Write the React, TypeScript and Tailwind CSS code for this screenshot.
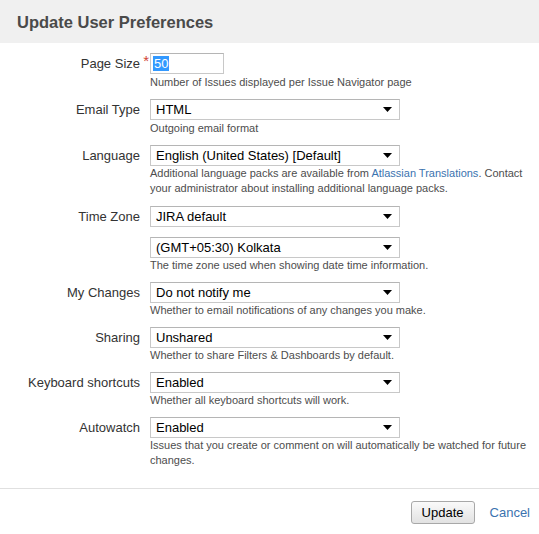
function Select({ value }: { value: string }) {
  return (
    <div className="flex h-[21px] w-[250px] items-center justify-between border border-[#c8c8c8] border-t-[#b5b5b5] bg-white pl-[5px] pr-[7px] text-[13px] text-black">
      <span>{value}</span>
      <svg width="9" height="5" viewBox="0 0 9 5">
        <path d="M0 0h9L4.5 5z" fill="#000" />
      </svg>
    </div>
  );
}

function Desc({ children, gap }: { children: React.ReactNode; gap?: boolean }) {
  return (
    <div className={gap ? "mt-px text-[11px] leading-[14px] text-[#4d4d4d]" : "text-[11px] leading-[14px] text-[#4d4d4d]"}>
      {children}
    </div>
  );
}

function Row({ label, children, star }: { label: string; children: React.ReactNode; star?: boolean }) {
  return (
    <div className="mb-[10px] grid grid-cols-[140px_1fr] gap-x-[10px]">
      <div className="relative flex h-[21px] items-center justify-end text-[13px] text-[#333]">
        {label}
        {star && <span className="absolute right-[-9px] top-[-3px] text-[15px] text-[#d04437]">*</span>}
      </div>
      <div>{children}</div>
    </div>
  );
}

export default function App() {
  return (
    <div className="w-[539px] h-[534px] bg-white font-['Liberation_Sans',Arial,sans-serif]">
      <div className="h-[43px] bg-[#f0f0f0] pl-[17px] pt-[10px] text-[16.5px] font-bold text-[#4a4a4a]">
        Update User Preferences
      </div>
      <div className="pt-[10px] pb-[10px] border-b border-[#e0e0e0]">
        <Row label="Page Size" star>
          <div className="flex h-[21px] w-[74px] items-center border border-[#c8c8c8] border-t-[#b5b5b5] bg-white pl-[2px] text-[13px]">
            <span className="bg-[#3399ff] px-px text-white leading-[15px]">50</span>
          </div>
          <Desc gap>Number of Issues displayed per Issue Navigator page</Desc>
        </Row>
        <Row label="Email Type">
          <Select value="HTML" />
          <Desc gap>Outgoing email format</Desc>
        </Row>
        <Row label="Language">
          <Select value="English (United States) [Default]" />
          <div className="text-[11px] leading-[15px] text-[#4d4d4d]">
            Additional language packs are available from{" "}
            <span className="text-[#3b73af]">Atlassian Translations</span>. Contact
            <br />
            your administrator about installing additional language packs.
          </div>
        </Row>
        <Row label="Time Zone">
          <Select value="JIRA default" />
        </Row>
        <Row label="">
          <Select value="(GMT+05:30) Kolkata" />
          <Desc>The time zone used when showing date time information.</Desc>
        </Row>
        <Row label="My Changes">
          <Select value="Do not notify me" />
          <Desc>Whether to email notifications of any changes you make.</Desc>
        </Row>
        <Row label="Sharing">
          <Select value="Unshared" />
          <Desc>Whether to share Filters &amp; Dashboards by default.</Desc>
        </Row>
        <Row label="Keyboard shortcuts">
          <Select value="Enabled" />
          <Desc>Whether all keyboard shortcuts will work.</Desc>
        </Row>
        <Row label="Autowatch">
          <Select value="Enabled" />
          <div className="text-[11px] leading-[15px] text-[#4d4d4d]">
            Issues that you create or comment on will automatically be watched for future
            <br />
            changes.
          </div>
        </Row>
      </div>
      <div className="flex items-center justify-end gap-[15px] pr-[9px] pt-[12px]">
        <button className="h-[23px] w-[64px] rounded-[3px] border border-[#a8a8a8] bg-gradient-to-b from-[#fafafa] to-[#e2e2e2] text-[13px] text-black">
          Update
        </button>
        <span className="text-[13px] text-[#3b73af]">Cancel</span>
      </div>
    </div>
  );
}
